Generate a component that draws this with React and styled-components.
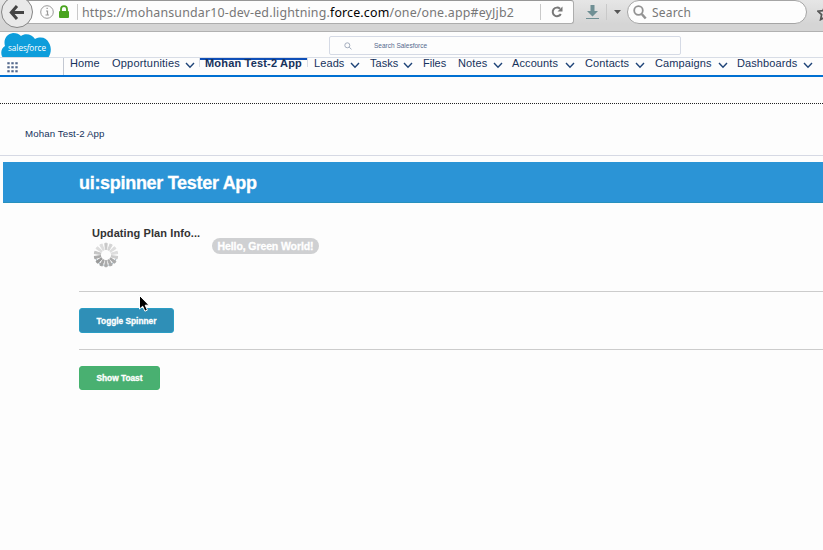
import React from "react";
import styled, { createGlobalStyle } from "styled-components";

const GlobalStyle = createGlobalStyle`
  * { box-sizing: border-box; }
  html, body { margin: 0; padding: 0; overflow: hidden; background: #fdfdfd; }
  body { font-family: "Liberation Sans", Arial, sans-serif; color: #16325c; }
  svg { display: block; flex: none; }
`;

const Page = styled.div`
  position: relative;
  width: 823px;
  height: 550px;
  overflow: hidden;
  background: #fdfdfd;
  white-space: nowrap;
`;

const BrowserBar = styled.div`
  display: flex;
  height: 32px;
  overflow: hidden;
  background: linear-gradient(#e6e6e6, #d5d5d5 24px);
  border-bottom: 1px solid #b1b1b1;
  font-family: "Noto Sans", sans-serif;
  font-size: 12px;
`;

const BackButton = styled.div`
  position: relative;
  z-index: 1;
  flex: none;
  width: 32px;
  height: 32px;
  margin: -4px -16px 0 1px;
  border: 1px solid #858585;
  border-radius: 50%;
  background: #e9e9e9;
  display: grid;
  place-items: center;
`;

const AddressField = styled.div`
  flex: none;
  width: 557px;
  height: 24px;
  padding-left: 22px;
  display: flex;
  align-items: center;
  background: #fdfdfd;
  border: 1px solid #adadad;
  border-top-color: #979797;
  border-radius: 0 3px 3px 0;
`;

const Divider = styled.div`
  flex: none;
  width: 1px;
  height: 16px;
  background: #c9c9c9;
  margin-left: ${(p) => p.$gap}px;
`;

const Url = styled.div`
  width: 461px;
  padding: 1px 0 0 4px;
  font-size: 12.4px;
  line-height: 22px;
  letter-spacing: 0.17px;
  color: #777;
  b { font-weight: 400; color: #000; }
`;

const Reload = styled.div`
  margin-left: 10px;
`;

const Download = styled.div`
  flex: none;
  display: flex;
  align-items: center;
  height: 24px;
  width: 53px;
  padding-left: 12px;
  gap: 7px;
`;

const BrowserSearch = styled.div`
  flex: none;
  width: 180px;
  height: 24px;
  display: flex;
  align-items: center;
  gap: 5px;
  padding: 0 0 0 5px;
  border: 1px solid #a5a5a5;
  border-radius: 12px;
  background: #fdfdfd;
  color: #777;
  letter-spacing: 0.2px;
`;

const StarSlot = styled.div`
  margin: 5px 0 0 10px;
`;

const SiteHeader = styled.header`
  display: flex;
  align-items: flex-start;
  height: 26px;
  border-bottom: 1px solid #d8dde6;
`;

const LogoSlot = styled.div`
  width: 329px;
  padding-top: 1px;
  height: 25px;
  overflow: hidden;
`;

const SiteSearch = styled.div`
  width: 352px;
  height: 19px;
  margin-top: 4px;
  border: 1px solid #d5dae5;
  border-radius: 2px;
  display: flex;
  align-items: center;
  padding: 0 0 0 14px;
  gap: 22px;
  font-size: 6.5px;
  color: #54698d;
`;

const NavBar = styled.nav`
  display: flex;
  height: 19px;
  border-bottom: 2px solid #0070d2;
`;

const AppLauncher = styled.div`
  width: 64px;
  height: 17px;
  flex: none;
  padding: 4px 0 0 7px;
  border-right: 1px solid #c3c8d2;
`;

const NavItem = styled.div`
  flex: none;
  width: ${(p) => p.$w}px;
  height: 17px;
  margin-left: ${(p) => p.$gap}px;
  display: flex;
  justify-content: space-between;
  font-size: 11px;
  line-height: 11px;
  letter-spacing: ${(p) => p.$ls}px;
  svg { margin-top: 4px; }
`;

const ActiveItem = styled.div`
  flex: none;
  width: 109px;
  height: 9px;
  margin-left: 4px;
  padding-left: 5px;
  border: 1px solid #d8dde6;
  border-width: 0 1px;
  box-shadow: inset 0 2px #0f4fb8;
  font-size: 11px;
  font-weight: 700;
  line-height: 11px;
  letter-spacing: 0.18px;
`;

const PageHeader = styled.div`
  height: 27px;
  border-bottom: 1px dotted #222;
`;

const Breadcrumb = styled.div`
  height: 52px;
  padding: 23px 0 0 25px;
  border-bottom: 1px solid #d6d9e4;
  font-size: 9.7px;
  line-height: 13px;
  letter-spacing: 0.1px;
`;

const Banner = styled.h1`
  margin: 6px 0 0 3px;
  height: 41px;
  padding-left: 76px;
  background: #2b94d6;
  color: #fff;
  border-bottom: 1px solid #2790bd;
  font-size: 18px;
  line-height: 42px;
  letter-spacing: -0.3px;
  -webkit-text-stroke: 0.3px #fff;
`;

const Section = styled.section`
  height: ${(p) => p.$h}px;
  margin-left: 79px;
  padding-top: ${(p) => p.$top}px;
  border-bottom: ${(p) => (p.$last ? 0 : 1)}px solid #ccc;
`;

const StatusRow = styled.div`
  display: flex;
  padding-left: 13px;
`;

const Status = styled.div`
  width: 120px;
  color: #333;
  font-size: 11px;
  font-weight: 700;
  line-height: 14px;
  letter-spacing: 0.09px;
  svg { margin: 1px 0 0 1px; }
`;

const Badge = styled.span`
  margin-top: 12px;
  width: 107px;
  height: 16px;
  border-radius: 8px;
  background: #cfd0d2;
  color: #fff;
  text-align: center;
  font-size: 10.5px;
  font-weight: 700;
  line-height: 17px;
  letter-spacing: -0.1px;
  -webkit-text-stroke: 0.3px #fff;
`;

const Button = styled.button`
  display: block;
  width: ${(p) => p.$w}px;
  height: ${(p) => p.$h}px;
  padding: 0;
  border: 1px solid ${(p) => p.$edge};
  border-radius: 3px;
  background: ${(p) => p.$bg};
  color: #fff;
  font: 700 8.3px/22px "Liberation Sans", Arial, sans-serif;
  -webkit-text-stroke: 0.3px #fff;
`;

const Pointer = styled.div`
  position: absolute;
  left: 138px;
  top: 294px;
`;

const Chevron = () => (
  <svg width="10" height="7" viewBox="0 0 10 7" fill="none" stroke="#1f4478" strokeWidth="1.4">
    <path d="M1 1l4 4.2L9 1" />
  </svg>
);

const Cloud = () => (
  <svg width="52" height="25" viewBox="0 0 52 25">
    <path
      fill="#0d9ddb"
      d="M3 25C0 21 1 15 5 13C3 6 7 1 13 0C17 0 19 1 21 3C25 0 32 1 35 6C41 3 47 5 49 10C52 15 51 21 48 25Z"
    />
    <text x="8" y="18" fontSize="8.6" fill="#fff" fontFamily="Open Sans" textLength="38" lengthAdjust="spacingAndGlyphs">
      sales<tspan fontStyle="italic">f</tspan>orce
    </text>
  </svg>
);

const Spinner = () => {
  const shades = ["#c8c8c8", "#d4d4d4", "#ddd", "#ddd", "#ccc", "#aaa", "#aaa", "#aaa", "#a4a4a4", "#999", "#aaa", "#c4c4c4", "#ddd", "#ddd"];
  return (
    <svg width="26" height="27" viewBox="0 0 26 27">
      <path d="M3 18A11 11 0 0 0 23 18" fill="none" stroke="#aebdc6" strokeWidth="1.2" />
      {shades.map((c, i) => (
        <path key={i} d="M13 2.2L14.2 2.4L13.6 8.5H12.4L11.8 2.4Z" fill={c} stroke={c} strokeWidth="1" transform={`rotate(${(i * 360) / 14} 13 14)`} />
      ))}
    </svg>
  );
};

const tabs = [
  ["Leads", 46, 6, 0.1, true],
  ["Tasks", 43, 10, 0.05, true],
  ["Files", 25, 10, 0, false],
  ["Notes", 45, 10, 0.1, true],
  ["Accounts", 63, 9, 0.1, true],
  ["Contacts", 60, 10, 0.1, true],
  ["Campaigns", 73, 10, 0.1, true],
  ["Dashboards", 76, 9, 0.1, true],
];

export default function App() {
  return (
    <Page>
      <GlobalStyle />
      <BrowserBar>
        <BackButton>
          <svg width="16" height="15" viewBox="0 0 16 15" fill="none" stroke="#454545" strokeWidth="3">
            <path d="M8 1L2.3 7.5L8 14M3 7.5H15" />
          </svg>
        </BackButton>
        <AddressField>
          <svg width="14" height="14" viewBox="0 0 14 14">
            <circle cx="7" cy="7" r="6.3" fill="none" stroke="#999" />
            <path d="M6 6h1.5v4M5.5 10h3.5M6.5 3.3h1.3" fill="none" stroke="#999" strokeWidth="1.2" />
          </svg>
          <svg width="22" height="14" viewBox="0 0 22 14">
            <path d="M7 6V4.2a3 3 0 0 1 6 0V6" fill="none" stroke="#4aa41f" strokeWidth="1.8" />
            <rect x="5" y="6" width="10" height="7" rx="1" fill="#4aa41f" />
          </svg>
          <Divider $gap={1} />
          <Url>
            https://mohansundar10-dev-ed.lightning.<b>force.com</b>/one/one.app#eyJjb2
          </Url>
          <Divider $gap={1} />
          <Reload>
            <svg width="12" height="12" viewBox="0 0 12 12">
              <path d="M9 2.8A4.3 4.3 0 1 0 9.8 8" fill="none" stroke="#777" strokeWidth="2" />
              <path d="M11.5 0.5V5.5H6.5Z" fill="#777" />
            </svg>
          </Reload>
        </AddressField>
        <Download>
          <svg width="13" height="16" viewBox="0 0 13 16">
            <path d="M4.5 1h4v6h3.5L6.5 12.5 1 7h3.5zM0 14h13v1H0z" fill="#6f8f94" />
          </svg>
          <Divider $gap={0} />
          <svg width="8" height="5" viewBox="0 0 8 5">
            <path d="M0 0h7L3.5 4z" fill="#555" />
          </svg>
        </Download>
        <BrowserSearch>
          <svg width="14" height="15" viewBox="0 0 14 15" fill="none" stroke="#929292">
            <circle cx="5.5" cy="5.5" r="4.3" strokeWidth="1.8" />
            <path d="M8.7 9l4 4.5" strokeWidth="2.5" />
          </svg>
          Search
        </BrowserSearch>
        <StarSlot>
          <svg width="16" height="16" viewBox="0 0 16 16" fill="none" stroke="#555" strokeWidth="1.7">
            <path d="M8 1l2.1 4.6 5 .6-3.7 3.4 1 5L8 12.1l-4.4 2.5 1-5L.9 6.2l5-.6z" />
          </svg>
        </StarSlot>
      </BrowserBar>
      <SiteHeader>
        <LogoSlot>
          <Cloud />
        </LogoSlot>
        <SiteSearch>
          <svg width="8" height="8" viewBox="0 0 8 8" fill="none" stroke="#a3adbd">
            <circle cx="3.3" cy="3.3" r="2.5" />
            <path d="M5.2 5.2L7.5 7.3" />
          </svg>
          Search Salesforce
        </SiteSearch>
      </SiteHeader>
      <NavBar>
        <AppLauncher>
          <svg width="12" height="11" viewBox="0 0 12 11" fill="#54698d">
            {[0, 4, 8].map((y) => [0, 4, 8].map((x) => <rect key={`${x}-${y}`} x={x + 0.3} y={y + 0.2} width="2.4" height="2.1" />))}
          </svg>
        </AppLauncher>
        <NavItem $w={30} $gap={6} $ls={0.1}>Home</NavItem>
        <NavItem $w={83} $gap={12} $ls={0.2}>
          Opportunities
          <Chevron />
        </NavItem>
        <ActiveItem>Mohan Test-2 App</ActiveItem>
        {tabs.map(([label, w, gap, ls, menu]) => (
          <NavItem key={label} $w={w} $gap={gap} $ls={ls}>
            {label}
            {menu && <Chevron />}
          </NavItem>
        ))}
      </NavBar>
      <PageHeader />
      <Breadcrumb>Mohan Test-2 App</Breadcrumb>
      <Banner>ui:spinner Tester App</Banner>
      <Section $h={89} $top={23}>
        <StatusRow>
          <Status>
            Updating Plan Info...
            <Spinner />
          </Status>
          <Badge>Hello, Green World!</Badge>
        </StatusRow>
      </Section>
      <Section $h={58} $top={16}>
        <Button $w={95} $h={25} $bg="#2f8fb7" $edge="#2a9dc4">Toggle Spinner</Button>
      </Section>
      <Section $h={60} $top={16} $last>
        <Button $w={81} $h={24} $bg="#49b071" $edge="#45b26e">Show Toast</Button>
      </Section>
      <Pointer>
        <svg width="14" height="20" viewBox="0 0 14 20">
          <path d="M1.5 1.5V15l3.2-2.8 2.2 5 2.5-1.1-2.2-4.9H11z" fill="#000" stroke="#fff" strokeWidth="1" />
        </svg>
      </Pointer>
    </Page>
  );
}
